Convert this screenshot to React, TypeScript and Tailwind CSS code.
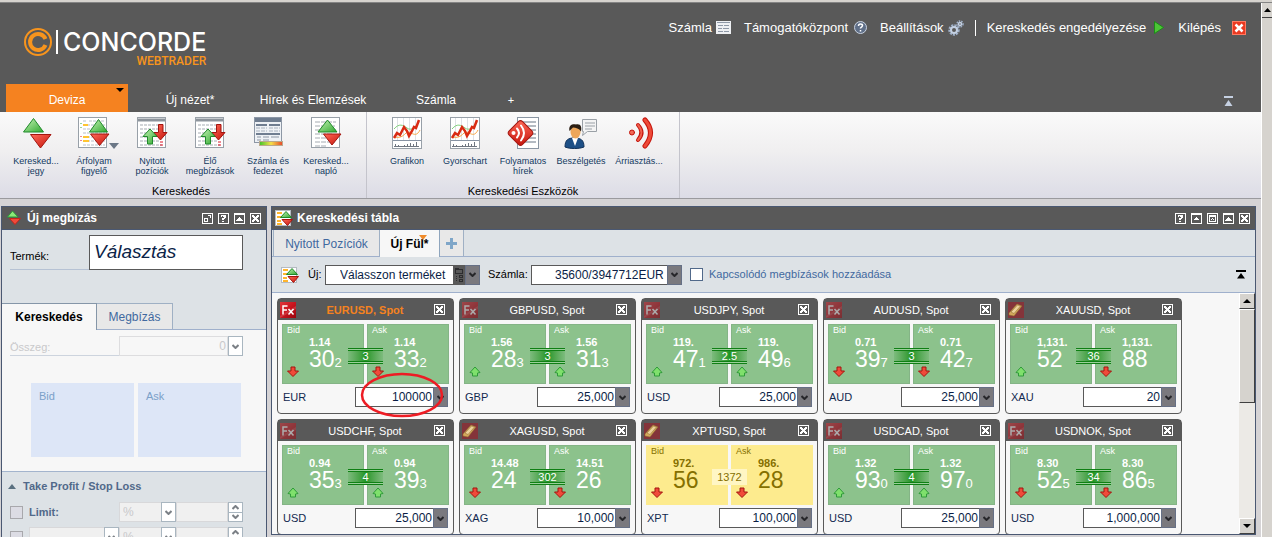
import { useId, type ReactNode } from 'react';
import clsx from 'clsx';

type Dir = 'up' | 'down';

type Quote = {
  pair: string;
  ccy: string;
  amount: string;
  kind: 'fx' | 'metal';
  spread: string;
  bid: [string, string, string, Dir];
  ask: [string, string, string, Dir];
  active?: boolean;
  stale?: boolean;
};

const quotes: Quote[] = [
  { pair: 'EURUSD', ccy: 'EUR', amount: '100000', kind: 'fx', spread: '3', bid: ['1.14', '30', '2', 'down'], ask: ['1.14', '33', '2', 'down'], active: true },
  { pair: 'GBPUSD', ccy: 'GBP', amount: '25,000', kind: 'fx', spread: '3', bid: ['1.56', '28', '3', 'up'], ask: ['1.56', '31', '3', 'up'] },
  { pair: 'USDJPY', ccy: 'USD', amount: '25,000', kind: 'fx', spread: '2.5', bid: ['119.', '47', '1', 'up'], ask: ['119.', '49', '6', 'up'] },
  { pair: 'AUDUSD', ccy: 'AUD', amount: '25,000', kind: 'fx', spread: '3', bid: ['0.71', '39', '7', 'down'], ask: ['0.71', '42', '7', 'down'] },
  { pair: 'XAUUSD', ccy: 'XAU', amount: '20', kind: 'metal', spread: '36', bid: ['1,131.', '52', '', 'up'], ask: ['1,131.', '88', '', 'down'] },
  { pair: 'USDCHF', ccy: 'USD', amount: '25,000', kind: 'fx', spread: '4', bid: ['0.94', '35', '3', 'up'], ask: ['0.94', '39', '3', 'up'] },
  { pair: 'XAGUSD', ccy: 'XAG', amount: '10,000', kind: 'metal', spread: '302', bid: ['14.48', '24', '', 'down'], ask: ['14.51', '26', '', 'down'] },
  { pair: 'XPTUSD', ccy: 'XPT', amount: '100,000', kind: 'metal', spread: '1372', bid: ['972.', '56', '', 'down'], ask: ['986.', '28', '', 'down'], stale: true },
  { pair: 'USDCAD', ccy: 'USD', amount: '25,000', kind: 'fx', spread: '4', bid: ['1.32', '93', '0', 'up'], ask: ['1.32', '97', '0', 'up'] },
  { pair: 'USDNOK', ccy: 'USD', amount: '1,000,000', kind: 'fx', spread: '34', bid: ['8.30', '52', '5', 'down'], ask: ['8.30', '86', '5', 'down'] },
];

/* ---------- icons ---------- */

const GreenUp = ({ d }: { d: string }) => <path d={d} fill="url(#g-green)" stroke="#1f8a2a" strokeLinejoin="round" />;
const RedDown = ({ d }: { d: string }) => <path d={d} fill="url(#g-red)" stroke="#a3150f" strokeLinejoin="round" />;

const Defs = () => (
  <svg width="0" height="0" className="absolute" aria-hidden="true">
    <defs>
      <linearGradient id="g-green" x1="0" y1="0" x2="1" y2="1">
        <stop offset="0" stopColor="#c9f5b8" />
        <stop offset="1" stopColor="#2fa82f" />
      </linearGradient>
      <linearGradient id="g-red" x1="0" y1="0" x2="1" y2="1">
        <stop offset="0" stopColor="#ff6a58" />
        <stop offset="1" stopColor="#c4140c" />
      </linearGradient>
      <linearGradient id="g-fx" x1="0" y1="0" x2="1" y2="1">
        <stop offset="0" stopColor="#e0363c" />
        <stop offset="0.5" stopColor="#c8141e" />
        <stop offset="1" stopColor="#99060e" />
      </linearGradient>
      <linearGradient id="g-heat" x1="0" y1="0" x2="1" y2="0">
        <stop offset="0" stopColor="#3fc32a" />
        <stop offset="0.5" stopColor="#f5e04a" />
        <stop offset="1" stopColor="#e8452a" />
      </linearGradient>
    </defs>
  </svg>
);

const Sheet = ({ x = 1, w = 28 }: { x?: number; w?: number }) => (
  <rect x={x + 0.5} y="0.5" width={w} height="30" fill="#fff" stroke="#98a0a8" />
);

const TicketIcon = () => (
  <svg width="32" height="32" viewBox="0 0 32 32">
    <GreenUp d="M13.500 1.500 23.500 15H3.500Z" />
    <RedDown d="M10.500 17.500H31L20.500 31Z" />
  </svg>
);

const WatchlistIcon = () => (
  <svg width="40" height="32" viewBox="0 0 40 32">
    <Sheet x={4} />
    <path d="M9 4h4M15 4h15M9 8h22M9 12h20M9 16h22M9 20h20M9 24h22M9 28h22" stroke="#b9c0c8" strokeDasharray="3 1" />
    <path d="M9 8h5M9 20h6M9 24h6" stroke="#ffc531" strokeWidth="2" />
    <path d="M7 6v8" stroke="#2fa82f" strokeDasharray="1 3" />
    <path d="M7 19v8" stroke="#d12" strokeDasharray="1 3" />
    <GreenUp d="M24.500 2.500 33.500 15H15.500Z" />
    <RedDown d="M16.500 17H35L25.500 28.500Z" />
  </svg>
);

const PositionsIcon = () => (
  <svg width="32" height="32" viewBox="0 0 32 32">
    <Sheet />
    <path d="M2 3h27" stroke="#8d949c" strokeWidth="3" />
    <path d="M4 8h22M4 12h20M4 16h10M4 20h8M4 24h20M4 28h22" stroke="#a5abb2" strokeDasharray="3 1" />
    <path d="M24 25h3M24 28h3" stroke="#d12" />
    <RedDown d="M22.500 7.500h4.500v8h4l-6.500 7.500-6.500-7.500h4.500Z" />
    <GreenUp d="M14 12l7 7.500h-4.500v7.500h-5v-7.500H7Z" />
  </svg>
);

const AccountIcon = () => (
  <svg width="32" height="32" viewBox="0 0 32 32">
    <rect x="2.500" y="0.500" width="27" height="25" fill="#eef1f5" stroke="#8d97a5" />
    <rect x="3" y="1" width="26" height="4" fill="#6f7d90" />
    <path d="M4 8h11M17 8h11" stroke="#6f7d90" strokeWidth="2" />
    <path d="M4 11h11M17 11h11M4 14h11M17 14h11" stroke="#a8b1bd" strokeDasharray="4 1" />
    <path d="M4 17h24" stroke="#6f7d90" strokeWidth="2" />
    <path d="M5 20h4M11 20h6M19 20h8M5 23h4M11 23h6" stroke="#8d97a5" />
    <rect x="7.500" y="24.500" width="23" height="4" fill="url(#g-heat)" stroke="#b9a98c" />
  </svg>
);

const LogIcon = () => (
  <svg width="32" height="32" viewBox="0 0 32 32">
    <Sheet />
    <path d="M5 5h21M5 9h20M5 13h21M5 17h18M5 21h21M5 25h20M5 29h12" stroke="#a5abb2" strokeDasharray="5 1" />
    <GreenUp d="M17.500 3 27 15H8Z" />
    <RedDown d="M13.500 17H31L22 28Z" />
  </svg>
);

const ChartIcon = () => (
  <svg width="32" height="32" viewBox="0 0 32 32">
    <rect x="1.500" y="0.500" width="29" height="31" fill="#fff" stroke="#98a0a8" />
    <path d="M6.500 1v22M12.500 1v22M18.500 1v22M24.500 1v22" stroke="#dfe2e6" />
    <path d="M3 12c5-6 9-4 13-1s8 0 12-6" fill="none" stroke="#7fd07a" />
    <path d="M3 20c6 1 8 0 12-4s9 7 14-3" fill="none" stroke="#f7a541" />
    <path d="M3 21l3-5 3 2 4-8 3 4 2 5 3-5 2-4 2 1 3-8" fill="none" stroke="#d92b13" strokeWidth="2.500" />
    <path d="M2 23.500h28" stroke="#8793a3" />
    <path d="M4.500 30v-3M7.500 30v-2M10.500 30v-1M13.500 30v-2M16.500 30v-3M19.500 30v-4M22.500 30v-3M25.500 30v-5M3 29.500h25" stroke="#6f7680" />
  </svg>
);

const NewsIcon = () => (
  <svg width="34" height="32" viewBox="0 0 34 32">
    <rect x="11.500" y="0.500" width="21" height="31" fill="#fff" stroke="#8a96a3" />
    <path d="M14 5h16M14 9h16M14 13h16M14 17h16M14 21h16M14 25h16" stroke="#b3bac2" strokeWidth="2" />
    <rect x="5" y="6.500" width="19" height="19" rx="3" transform="rotate(45 14.500 16)" fill="url(#g-red)" stroke="#a3150f" />
    <circle cx="7.500" cy="16" r="2" fill="#fff" />
    <path d="M11 11.500q4 4.500 0 9M15 8.500q6 7.500 0 15" fill="none" stroke="#fff" strokeWidth="2" strokeLinecap="round" />
  </svg>
);

const ChatIcon = () => (
  <svg width="34" height="32" viewBox="0 0 34 32">
    <path d="M18.500 2.500h14v12h-9l-5 4 1-4h-1z" fill="#f4f4f4" stroke="#9aa0a6" />
    <path d="M21 6h10M21 9h10M21 12h7" stroke="#9aa0a6" />
    <path d="M1 30c0-7 3-9 9-9 7 0 10 2 10 9-5 2-14 2-19 0Z" fill="#1d4f86" stroke="#12325a" />
    <path d="M8 21l3 8 3-8z" fill="#fff" />
    <ellipse cx="11.500" cy="15" rx="5" ry="6.500" fill="#eda65a" />
    <path d="M5.500 14C4 8 9 6.500 12 7.500c5-1 6 3 5 7-2-3-5-4-8-4-1 1-2 2-3.500 3.500Z" fill="#2a1d12" />
  </svg>
);

const AlertIcon = () => (
  <svg width="32" height="32" viewBox="0 0 32 32" fill="none" strokeLinecap="round">
    <circle cx="9" cy="15.500" r="2.500" fill="#f06a58" stroke="#c4140c" />
    <path d="M15 8q7 7.500 0 15" stroke="#c4140c" strokeWidth="4" />
    <path d="M15 8q7 7.500 0 15" stroke="#f0604e" strokeWidth="2" />
    <path d="M22 3q11 12.500 0 26" stroke="#c4140c" strokeWidth="5" />
    <path d="M22 3q11 12.500 0 26" stroke="#ee4a38" strokeWidth="3" />
  </svg>
);

const MiniBoard = () => (
  <svg width="18" height="18" viewBox="0 0 18 18" className="shrink-0">
    <rect x="0.500" y="1.500" width="15" height="15" fill="#fff" stroke="#b4bac2" />
    <path d="M2 4h5M2 8h4M2 12h4M2 15h5" stroke="#ffb52e" strokeWidth="2" />
    <GreenUp d="M11 2.500 16.500 8.500H5.500Z" />
    <RedDown d="M7 10.500H17.500L12.500 16.500Z" />
  </svg>
);

const PriceArrow = ({ dir }: { dir: Dir }) => (
  <svg width="12" height="12" viewBox="0 0 12 12" className="shrink-0">
    {dir === 'up' ? (
      <path d="M6 1 11 6.500 8.500 7v3h-5V7L1 6.500Z" fill="#7fe06c" stroke="#2f9a3a" strokeLinejoin="round" />
    ) : (
      <path d="M4 1h4v4h3.500L6 10.500.5 5H4Z" fill="#f04a3a" stroke="#a3150f" strokeLinejoin="round" />
    )}
  </svg>
);

const ProductIcon = ({ kind, dim }: { kind: Quote['kind']; dim: boolean }) => (
  <svg width="16" height="16" viewBox="0 0 16 16" className={clsx('shrink-0', dim && kind === 'fx' && 'opacity-50')}>
    <rect width="16" height="16" fill={kind === 'fx' ? 'url(#g-fx)' : '#84343a'} />
    {kind === 'fx' ? (
      <g fill="none" stroke="#fff" strokeWidth="1.5">
        <path d="M0 14 16 4v3L0 16Z" fill="#fff" fillOpacity=".15" stroke="none" />
        <path d="M3 12.500V4h4.500M3 8h4M8.500 7l5 5.500M13.500 7l-5 5.500" />
      </g>
    ) : (
      <g stroke="#8a6a2c" strokeWidth=".5">
        <path d="M1 11 9 2l5 2-8 10-5-1Z" fill="#d3a85c" />
        <path d="M3 10 9.500 3l3 1L6 11.500Z" fill="#ecd09a" />
      </g>
    )}
  </svg>
);

const Chevron = ({ up = false }: { up?: boolean }) => (
  <svg width="7" height="5" viewBox="0 0 7 5" fill="none" stroke="currentColor" strokeWidth="2" className="shrink-0">
    <path d={up ? 'M.5 4 3.500 1l3 3' : 'M.5 1l3 3 3-3'} />
  </svg>
);

/* ---------- small parts ---------- */

// filled pixel glyphs inside an 11px frame
const winGlyphs: Record<string, { label: string; d: string }> = {
  detach: { label: 'Leválasztás', d: 'M2 5h4v4H2zM3 6v2h2V6zM6 2h3v3H8V3H6z' },
  help: { label: 'Súgó', d: 'M3 2h5v3H7v1H6v1H4V5h2V4H5V3H4v1H3zM4 8h2v1H4z' },
  collapse: { label: 'Összecsukás', d: 'M1 1h9v1H1zM5 4h1v1h1v1h1v1h1v1H2V7h1V6h1V5h1z' },
  small: { label: 'Kicsinyítés', d: 'M1 1h9v1H1zM5 4h1v1h1v1h1v1H3V6h1V5h1z' },
  max: { label: 'Nagyítás', d: 'M2 2h7v7H2zM3 4v4h5V4zM5 5h1v2H5zM4 6h3v1H4z' },
  close: { label: 'Bezárás', d: 'M2 2h2v1h1v1h1V3h1V2h2v2H8v1H7v1h1v1h1v2H7V8H6V7H5v1H4v1H2V7h1V6h1V5H3V4H2z' },
};

const WinButton = ({ type }: { type: string }) => (
  <button type="button" aria-label={winGlyphs[type].label} className="block h-[11px] w-[11px] shrink-0">
    <svg width="11" height="11" viewBox="0 0 11 11" shapeRendering="crispEdges">
      <rect x="0.500" y="0.500" width="10" height="10" fill="none" stroke="#fff" />
      <path d={winGlyphs[type].d} fill="#fff" fillRule="evenodd" />
    </svg>
  </button>
);

const PanelTitle = ({ icon, title, buttons }: { icon: ReactNode; title: string; buttons: string[] }) => (
  <div className="flex h-6 shrink-0 items-center border-t border-b border-[#4a5872] bg-[#595959] pr-[5px]">
    {icon}
    <h2 className="flex-1 text-xs font-bold text-white">{title}</h2>
    <div className="flex gap-[5px]">
      {buttons.map((b) => (
        <WinButton key={b} type={b} />
      ))}
    </div>
  </div>
);

const Tool = ({ icon, label, menu }: { icon: ReactNode; label: string; menu?: boolean }) => (
  <button type="button" className="relative flex w-[58px] flex-col items-center text-[#12395f]">
    <span className="flex h-8 items-center">{icon}</span>
    <span className="mt-[7px] text-[9px] leading-[10px] whitespace-pre-line">{label}</span>
    {menu && (
      <svg width="10" height="6" viewBox="0 0 10 6" className="absolute top-[26px] right-1">
        <path d="M0 0h10L5 6Z" fill="#6b7786" />
      </svg>
    )}
  </button>
);

const Spinner = () => (
  <span className="flex w-[15px] flex-col border border-[#a9b6c0] bg-white text-[#7b8086]">
    <button type="button" disabled aria-label="Növelés" className="flex flex-1 items-center justify-center border-b border-[#a9b6c0]">
      <Chevron up />
    </button>
    <button type="button" disabled aria-label="Csökkentés" className="flex flex-1 items-center justify-center">
      <Chevron />
    </button>
  </span>
);

const DisabledSelect = ({ label, value, className }: { label: string; value: string; className: string }) => (
  <span className={clsx('relative flex h-5', className)}>
    <select
      disabled
      aria-label={label}
      className="h-5 w-full appearance-none border border-[#d8d8da] bg-[#f0f0f0] pl-[3px] text-xs text-[#c9c9cb] disabled:opacity-100"
    >
      <option>{value}</option>
    </select>
    <span className="pointer-events-none absolute inset-y-0 right-0 flex w-[15px] items-center justify-center border border-[#a9b6c0] bg-white text-[#7b8086]">
      <Chevron />
    </span>
  </span>
);

const ScrollBar = () => (
  <div className="flex w-4 shrink-0 flex-col bg-[#eceae6]" aria-hidden="true">
    <div className="flex h-4 items-center justify-center border border-t-white border-r-[#404040] border-b-[#404040] border-l-white bg-[#d6d3ce]">
      <svg width="8" height="4" viewBox="0 0 8 4"><path d="M4 0l4 4H0z" /></svg>
    </div>
    <div className="h-[94px] border border-t-white border-r-[#404040] border-b-[#404040] border-l-white bg-[#d6d3ce]" />
    <div className="flex-1" />
    <div className="flex h-4 items-center justify-center border border-t-white border-r-[#404040] border-b-[#404040] border-l-white bg-[#d6d3ce]">
      <svg width="8" height="4" viewBox="0 0 8 4"><path d="M0 0h8L4 4z" /></svg>
    </div>
  </div>
);

/* ---------- price cards ---------- */

const PriceTile = ({ side, price, stale }: { side: string; price: Quote['bid']; stale?: boolean }) => {
  const [base, pips, frac, dir] = price;
  return (
    <button
      type="button"
      className={clsx(
        'h-[60px] flex-1 border pl-1 text-left',
        stale ? 'border-[#fdeb8e] bg-[#fdeb8e] text-[#857000]' : 'border-[#84b486] bg-[#8cc28c] text-white',
      )}
    >
      <span className="block text-[9px] leading-[11px]">{side}</span>
      <span className="flex h-[47px]">
        <span className="flex w-[22px] items-end pb-[5px]">
          <PriceArrow dir={dir} />
        </span>
        <span>
          <span className="block text-[11px] leading-3 font-bold">{base}</span>
          <span className="block text-[23px] leading-[23px] whitespace-nowrap">
            {pips}
            <span className="text-[13px] leading-3">{frac}</span>
          </span>
        </span>
      </span>
    </button>
  );
};

const QuoteCard = ({ quote }: { quote: Quote }) => {
  const id = useId();
  const { pair, ccy, amount, kind, spread, bid, ask, active, stale } = quote;
  return (
    <article className="relative h-[116px] w-[177px] rounded border border-[#595959] bg-[#f7f7f7]">
      <header className="flex h-[21px] items-center bg-[#595959] pr-2 pl-0.5">
        <ProductIcon kind={kind} dim={!active} />
        <h3 className={clsx('flex-1 text-center text-[11px] leading-4', active ? 'font-bold text-[#f58220]' : 'text-white')}>
          {pair}, Spot
        </h3>
        <WinButton type="close" />
      </header>
      <div className="relative mx-1 mt-1 flex gap-[3px]">
        <PriceTile side="Bid" price={bid} stale={stale} />
        <PriceTile side="Ask" price={ask} stale={stale} />
        <span
          className={clsx(
            'pointer-events-none absolute top-6 left-[66px] flex h-4 w-[35px] items-center justify-center text-[11px] leading-3',
            stale ? 'bg-[#fff6c4] text-[#857000]' : 'border-y border-[#0f7f14] bg-[#9bd09b] text-white',
          )}
        >
          <span
            className={clsx(
              'flex h-3 w-full items-center justify-center',
              !stale && 'border-y border-[#0f7f14] bg-linear-to-r from-[#7dbb7d] via-[#1f9622] to-[#7dbb7d]',
            )}
          >
            {spread}
          </span>
        </span>
      </div>
      <div className="flex h-[26px] items-center justify-between pr-[5px] pl-[5px]">
        <label htmlFor={id} className="text-[11px] text-[#12294f]">
          {ccy}
        </label>
        <span className="flex h-5 w-[93px]">
          <input
            id={id}
            defaultValue={amount}
            className="h-5 w-[78px] border border-r-0 border-[#595959] bg-white pr-px text-right text-xs text-[#0a1e46]"
          />
          <button
            type="button"
            aria-label={`${ccy} összegek`}
            className="flex w-[15px] items-center justify-center border border-[#667086] bg-[#7a797e] text-[#26262a]"
          >
            <Chevron />
          </button>
        </span>
      </div>
      {active && (
        <svg width="84" height="46" viewBox="0 0 84 46" className="pointer-events-none absolute top-[73px] left-[82px] z-10">
          <ellipse cx="42" cy="23" rx="40" ry="21" fill="none" stroke="#ed1c24" strokeWidth="2.500" />
        </svg>
      )}
    </article>
  );
};

/* ---------- page sections ---------- */

const Header = () => (
  <header className="flex h-[109px] shrink-0 flex-col justify-between bg-[#595959] text-white">
    <div className="flex items-start justify-between pt-3.5 pr-[15px] pl-6">
      <a href="#home" className="mt-[11px] flex items-start text-white">
        <svg width="34" height="28" viewBox="0 0 34 28" fill="none" stroke="#f7941d">
          <circle cx="14" cy="14" r="13" strokeWidth="2" />
          <path d="M21.500 11A8 8 0 1 0 21.500 17" strokeWidth="4" />
          <path d="M33 2v24" stroke="#fff" strokeWidth="2" />
        </svg>
        <span className="flex flex-col items-end pl-[5px]">
          <span className="font-[Inter,'Liberation_Sans',sans-serif] text-[25px] leading-7 font-medium">CONCORDE</span>
          <span className="font-[Roboto,'Liberation_Sans',sans-serif] text-xs leading-[10px] font-medium text-[#f7941d]">
            WEBTRADER
          </span>
        </span>
      </a>
      <nav className="flex h-5 items-center pt-px text-[13px]">
        <a href="#account" className="flex items-center gap-1">
          Számla
          <svg width="15" height="13" viewBox="0 0 15 13">
            <rect width="15" height="13" fill="#eef0f3" />
            <path d="M1 1.500h13M2 4.500h5M8 4.500h5M2 7.500h4M7 7.500h6M2 10.500h5M8 10.500h5" stroke="#8e98a6" />
          </svg>
        </a>
        <a href="#support" className="ml-[13px] flex items-center gap-1.5">
          Támogatóközpont
          <svg width="13" height="13" viewBox="0 0 13 13">
            <circle cx="6.500" cy="6.500" r="6" fill="#5f6f88" stroke="#c9d2e0" />
            <path d="M4.500 5q0-2 2-2t2 1.500q0 1-2 2.500v.5M6.500 9v1.500" fill="none" stroke="#fff" strokeWidth="1.500" />
          </svg>
        </a>
        <a href="#settings" className="ml-[13px] flex items-center gap-1">
          Beállítások
          <svg width="16" height="16" viewBox="0 0 16 16" fill="none">
            <circle cx="6" cy="10" r="4.500" stroke="#9fb0c8" strokeWidth="2.500" strokeDasharray="2 1" />
            <circle cx="6" cy="10" r="3" stroke="#c3d0e2" strokeWidth="2" />
            <circle cx="12" cy="4" r="3" stroke="#9fb0c8" strokeWidth="1.500" strokeDasharray="1.500 1" />
            <circle cx="12" cy="4" r="1.500" stroke="#c3d0e2" strokeWidth="1.500" />
          </svg>
        </a>
        <span className="mx-[11px] h-4 w-px bg-white" />
        <button type="button" className="flex items-center gap-2">
          Kereskedés engedélyezése
          <svg width="10" height="13" viewBox="0 0 10 13">
            <path d="M.5.500 9.500 6.500.5 12.500Z" fill="#4cc636" stroke="#1d8d18" />
          </svg>
        </button>
        <button type="button" className="ml-3.5 flex items-center gap-[11px]">
          Kilépés
          <svg width="14" height="14" viewBox="0 0 14 14">
            <rect x="0.500" y="0.500" width="13" height="13" fill="#ea3a22" stroke="#ff7a62" />
            <path d="M3.500 3.500l7 7M10.500 3.500l-7 7" stroke="#fff" strokeWidth="2.500" />
          </svg>
        </button>
      </nav>
    </div>
    <div className="flex items-end justify-between pr-7 pl-1.5">
      <div role="tablist" className="flex gap-px text-xs">
        <button type="button" role="tab" aria-selected="true" className="relative h-7 w-[122px] bg-[#f58220] pt-1">
          Deviza
          <svg width="8" height="4" viewBox="0 0 8 4" className="absolute top-1 right-1">
            <path d="M0 0h8L4 4z" fill="#000" />
          </svg>
        </button>
        {['Új nézet*', 'Hírek és Elemzések', 'Számla'].map((t) => (
          <button key={t} type="button" role="tab" aria-selected="false" className="h-7 w-[122px] pt-1">
            {t}
          </button>
        ))}
        <button type="button" role="tab" aria-selected="false" aria-label="Új lap" className="h-7 w-[26px] pt-1 text-[11px]">
          +
        </button>
      </div>
      <button type="button" aria-label="Menüszalag elrejtése" className="pb-1.5">
        <svg width="9" height="10" viewBox="0 0 9 10" fill="#c5d0e2">
          <path d="M0 0h9v2H0zM4.500 4 8.500 10H.5Z" />
        </svg>
      </button>
    </div>
  </header>
);

const Ribbon = () => (
  <div className="flex h-[87px] shrink-0 border-b border-[#9a9a9e] bg-linear-to-b from-[#fafafa] via-[#f0eff0] via-45% to-[#dcdce6]">
    <section className="flex flex-col border-r border-[#c4c4cc] pt-[5px] pr-[11px] pl-[7px]">
      <div className="flex h-[67px] items-start">
        <Tool icon={<TicketIcon />} label={'Keresked...\njegy'} />
        <Tool icon={<WatchlistIcon />} label={'Árfolyam\nfigyelő'} menu />
        <Tool icon={<PositionsIcon />} label={'Nyitott\npozíciók'} />
        <Tool icon={<PositionsIcon />} label={'Élő\nmegbízások'} />
        <Tool icon={<AccountIcon />} label={'Számla és\nfedezet'} />
        <Tool icon={<LogIcon />} label={'Keresked...\nnapló'} />
      </div>
      <h2 className="text-center text-[11px] leading-[14px] text-black">Kereskedés</h2>
    </section>
    <section className="flex flex-col border-r border-[#c4c4cc] px-[11px] pt-[5px]">
      <div className="flex h-[67px] items-start">
        <Tool icon={<ChartIcon />} label="Grafikon" />
        <Tool icon={<ChartIcon />} label="Gyorschart" />
        <Tool icon={<NewsIcon />} label={'Folyamatos\nhírek'} />
        <Tool icon={<ChatIcon />} label="Beszélgetés" />
        <Tool icon={<AlertIcon />} label="Árriasztás..." />
      </div>
      <h2 className="text-center text-[11px] leading-[14px] text-black">Kereskedési Eszközök</h2>
    </section>
  </div>
);

const OrderPanel = () => (
  <section className="flex w-[266px] shrink-0 flex-col overflow-hidden border-x border-[#4a5872] bg-[#dde2e6]">
    <PanelTitle
      title="Új megbízás"
      buttons={['detach', 'help', 'collapse', 'close']}
      icon={
        <svg width="14" height="16" viewBox="0 0 14 16" className="mr-1.5 ml-[5px]">
          <path d="M5.500 1 11 7H.5Z" fill="#8be878" stroke="#2f9a3a" />
          <path d="M2.500 8.500h11L8 14.500Z" fill="#f04a3a" stroke="#c4241c" />
        </svg>
      }
    />
    <div className="mt-[5px] mr-[23px] ml-2 flex h-[35px] shrink-0 items-stretch">
      <label htmlFor="product" className="w-[79px] border-b border-[#b6c2d4] pt-[13px] text-[11px] leading-4 text-black">
        Termék:
      </label>
      <input
        id="product"
        defaultValue="Választás"
        className="min-w-0 flex-1 border border-[#595959] bg-white pl-1 text-[19px] text-[#0b2347] italic"
      />
    </div>
    <div role="tablist" className="mt-[33px] flex h-[27px] shrink-0 border-b border-[#9fb0cc] text-xs">
      <button type="button" role="tab" aria-selected="true" className="h-[27px] w-[95px] border-t border-r border-[#8596a8] bg-[#f7f7f7] font-bold text-black">
        Kereskedés
      </button>
      <button type="button" role="tab" aria-selected="false" className="w-[76px] border-t border-r border-[#9fb0c4] bg-[#e8e8e8] text-[#41699f]">
        Megbízás
      </button>
    </div>
    <div className="h-[142px] shrink-0 border-b border-[#a3b4cd] bg-[#f7f7f7] pt-1.5">
      <div className="mr-[23px] ml-2 flex h-5">
        <label htmlFor="sum" className="w-[109px] border-b border-[#cdd4de] pt-[3px] text-[11px] leading-4 text-[#c9c9cb]">
          Összeg:
        </label>
        <input
          id="sum"
          disabled
          defaultValue="0"
          className="min-w-0 flex-1 border border-[#dddddf] bg-transparent pr-px text-right text-xs text-[#c9c9cb]"
        />
        <button type="button" disabled aria-label="Összegek" className="flex w-[15px] items-center justify-center border border-[#a9b6c0] bg-white text-[#7b8086]">
          <Chevron />
        </button>
      </div>
      <div className="mt-[27px] flex gap-1 pl-[29px] text-[11px]">
        {['Bid', 'Ask'].map((side) => (
          <button key={side} type="button" disabled className="flex h-[74px] w-[103px] items-start bg-[#dde6f7] pt-[5px] pl-2 text-[#7ba0c9]">
            {side}
          </button>
        ))}
      </div>
    </div>
    <h3 className="flex shrink-0 items-center gap-[7px] pt-1.5 pl-1.5 text-[11px] leading-4 font-bold text-[#51698a]">
      <svg width="8" height="5" viewBox="0 0 8 5" fill="#5a7080">
        <path d="M4 0l4 5H0z" />
      </svg>
      Take Profit / Stop Loss
    </h3>
    <div className="mt-2 mr-[23px] ml-2 flex h-5 shrink-0 items-center">
      <label className="flex w-[109px] items-center gap-1.5 text-[11px] font-bold text-[#51698a]">
        <input type="checkbox" disabled className="h-[13px] w-[13px] appearance-none border border-[#a8a8ac] bg-[#dcdce4]" />
        Limit:
      </label>
      <DisabledSelect label="Limit egysége" value="%" className="w-[57px]" />
      <input disabled aria-label="Limit értéke" className="h-5 min-w-0 flex-1 border border-[#d8d8da] bg-[#f0f0f0]" />
      <span className="flex h-5">
        <Spinner />
      </span>
    </div>
    <div className="mt-[5px] mr-[23px] ml-2 flex h-5 shrink-0 items-center">
      <input type="checkbox" disabled aria-label="Stop" className="mr-1.5 h-[13px] w-[13px] appearance-none border border-[#a8a8ac] bg-[#dcdce4]" />
      <DisabledSelect label="Stop típusa" value="" className="w-[90px]" />
      <DisabledSelect label="Stop egysége" value="%" className="w-[57px]" />
      <input disabled aria-label="Stop értéke" className="h-5 min-w-0 flex-1 border border-[#d8d8da] bg-[#f0f0f0]" />
      <span className="flex h-5">
        <Spinner />
      </span>
    </div>
  </section>
);

const BoardPanel = () => (
  <section className="mr-[5px] mb-0.5 ml-1 flex min-w-0 flex-1 flex-col border-x border-b border-[#4a5872] bg-[#dde2e6]">
    <PanelTitle
      title="Kereskedési tábla"
      buttons={['help', 'small', 'max', 'collapse', 'close']}
      icon={<span className="mr-1 ml-[3px]"><MiniBoard /></span>}
    />
    <div role="tablist" className="flex h-[27px] shrink-0 border-b border-[#9fb0cc] pl-px text-xs">
      <button type="button" role="tab" aria-selected="false" className="w-[107px] border-r border-l border-[#9fb0c4] bg-[#e8e8e8] pt-px text-[#41699f]">
        Nyitott Pozíciók
      </button>
      <button type="button" role="tab" aria-selected="true" className="relative h-[27px] w-[60px] border-r border-[#8fa5bd] bg-[#f7f7f7] font-bold text-black">
        Új Fül*
        <svg width="8" height="5" viewBox="0 0 8 5" className="absolute top-[5px] right-3">
          <path d="M0 0h8L4 5z" fill="#ef8a2a" />
        </svg>
      </button>
      <button type="button" role="tab" aria-selected="false" aria-label="Új fül" className="flex w-6 items-center justify-center border-r border-[#9fb0c4] bg-[#e8e8e8]">
        <svg width="11" height="11" viewBox="0 0 11 11">
          <path d="M4 0h3v4h4v3H7v4H4V7H0V4h4z" fill="#7fa6c8" />
        </svg>
      </button>
    </div>
    <div className="flex h-9 shrink-0 items-center border-b border-[#9fb0cc] pr-[9px] pl-[9px] text-[11px]">
      <MiniBoard />
      <label htmlFor="new-product" className="ml-[9px] w-[17px] text-black">
        Új:
      </label>
      <span className="relative flex">
        <select id="new-product" className="h-5 w-[155px] appearance-none border border-[#595959] bg-white pl-3.5 text-xs text-[#0a1e46]">
          <option>Válasszon terméket</option>
        </select>
        <span className="pointer-events-none absolute inset-y-0 right-0 flex">
          <span className="flex w-3 items-center justify-center bg-[#595959]">
            <svg width="8" height="14" viewBox="0 0 8 14" shapeRendering="crispEdges" fill="#2c2c2e">
              <path d="M0 0h4v1h4v5H0zM1 2v3h6V2zM1 8h1v1H1zM1 10h1v1H1zM1 12h1v1H1zM4 7h4v3H4zM5 8v1h2V8zM4 11h4v3H4zM5 12v1h2v-1z" fillRule="evenodd" />
            </svg>
          </span>
          <span className="flex w-[15px] items-center justify-center border border-[#667086] bg-[#7a797e] text-[#26262a]">
            <Chevron />
          </span>
        </span>
      </span>
      <label htmlFor="account" className="ml-2 w-[43px] text-black">
        Számla:
      </label>
      <span className="relative flex">
        <select id="account" className="h-5 w-[151px] appearance-none border border-[#595959] bg-white pl-[23px] text-xs text-[#0a1e46]">
          <option>35600/3947712EUR</option>
        </select>
        <span className="pointer-events-none absolute inset-y-0 right-0 flex w-[15px] items-center justify-center border border-[#667086] bg-[#7a797e] text-[#26262a]">
          <Chevron />
        </span>
      </span>
      <label className="ml-2 flex items-center gap-1.5 text-[#41699f]">
        <input type="checkbox" className="h-[13px] w-[13px] appearance-none border border-[#51698a] bg-white" />
        Kapcsolódó megbízások hozzáadása
      </label>
      <button type="button" aria-label="Eszköztár elrejtése" className="ml-auto">
        <svg width="10" height="9" viewBox="0 0 10 9">
          <path d="M0 0h10v2H0zM5 3 9 8.500H1Z" />
        </svg>
      </button>
    </div>
    <div className="flex min-h-0 flex-1 bg-[#f7f7f7]">
      <div className="flex min-w-0 flex-1 flex-wrap content-start gap-[5px] overflow-hidden pt-[5px] pl-[5px]">
        {quotes.map((q) => (
          <QuoteCard key={q.pair} quote={q} />
        ))}
      </div>
      <ScrollBar />
    </div>
  </section>
);

export default function App() {
  return (
    <div className="flex h-screen flex-col bg-white pb-3.5 font-['Liberation_Sans',Arial,sans-serif]">
      <Defs />
      <div className="h-[3px] shrink-0 border-b border-[#848484] bg-[#d6d3ce]" />
      <div className="flex min-h-0 flex-1">
        <main className="flex min-w-0 flex-1 flex-col bg-[#d5d3d5]">
          <Header />
          <Ribbon />
          <div className="flex min-h-0 flex-1 pt-[7px] pl-px">
            <OrderPanel />
            <BoardPanel />
          </div>
        </main>
        <div className="flex w-[11px] shrink-0 flex-col border-l border-white bg-[#d6d3ce]" aria-hidden="true">
          <div className="flex h-[15px] items-center justify-center border-b border-[#404040]">
            <svg width="7" height="4" viewBox="0 0 7 4"><path d="M3.500 0 7 4H0z" /></svg>
          </div>
        </div>
      </div>
    </div>
  );
}
